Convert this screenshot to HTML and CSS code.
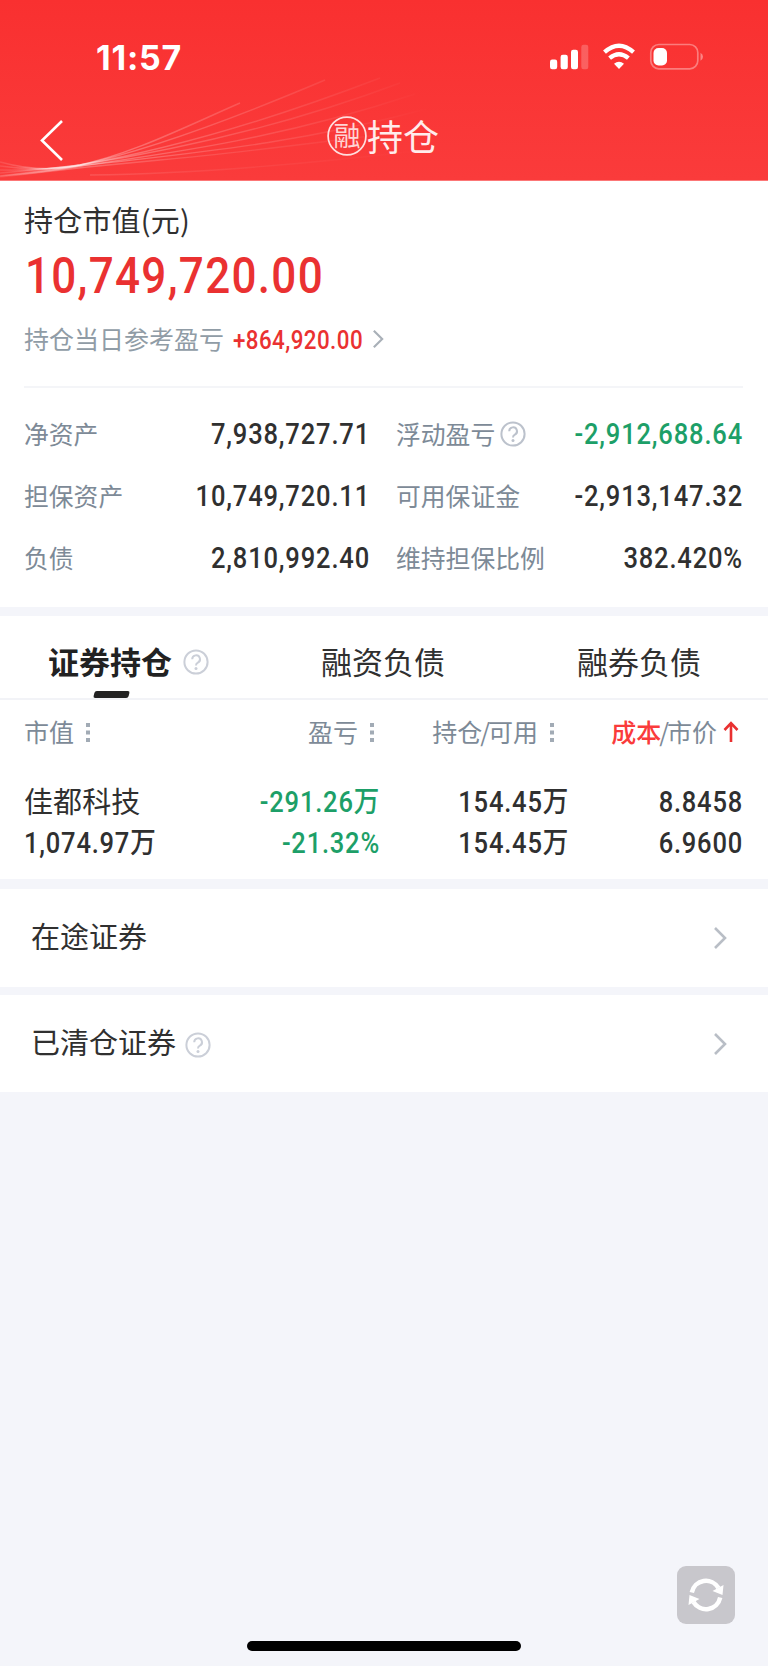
FILE: index.html
```html
<!DOCTYPE html>
<html lang="zh-CN">
<head>
<meta charset="utf-8">
<title>融持仓</title>
<link rel="stylesheet" href="styles.css">
</head>
<body>
<svg class="defs" width="0" height="0">
  <symbol id="help" viewBox="0 0 26 26"><g fill="none" stroke="currentColor"><circle cx="13" cy="13" r="11.6" stroke-width="2"/><path d="M9.2 10.2a3.9 3.9 0 1 1 5.7 3.5c-1.3.7-1.9 1.2-1.9 2.8" stroke-width="2"/></g><circle cx="13" cy="19.4" r="1.500" fill="currentColor"/></symbol>
  <symbol id="chev" viewBox="0 0 14 24"><path d="M2 2l10 10L2 22" fill="none" stroke="currentColor" stroke-width="2.6"/></symbol>
  <symbol id="dots" viewBox="0 0 6 22"><path d="M1 2h4v4H1zM1 9.500h4v4H1zM1 17h4v4H1z" fill="currentColor"/></symbol>
</svg>
<div class="screen">
  <header class="top">
    <svg class="waves" width="480" height="181" viewBox="0 0 480 181" fill="none" stroke="url(#fade)" stroke-width="1.4">
      <defs><linearGradient id="fade" gradientUnits="userSpaceOnUse" x1="0" y1="0" x2="430" y2="0"><stop offset="0" stop-color="#fff" stop-opacity=".1"/><stop offset=".15" stop-color="#fff" stop-opacity=".36"/><stop offset=".45" stop-color="#fff" stop-opacity=".19"/><stop offset="1" stop-color="#fff" stop-opacity="0"/></linearGradient></defs>
      <path d="M0 162Q40 173 75 166C130 155 185 127 240 103"/>
      <path d="M0 166Q40 172 80 165C150 150 235 118 325 80"/>
      <path d="M0 170Q40 171 80 165C160 151 260 124 380 78"/>
      <path d="M0 173Q40 170 80 165C170 151 280 128 400 83"/>
      <path d="M0 176Q40 171 80 166C180 152 285 137 415 94"/>
      <path d="M0 176Q40 173 80 166C180 154 290 146 430 108"/>
      <path d="M0 177Q80 167 160 160T440 127" opacity=".7"/>
      <path d="M90 175Q240 173 440 148" opacity=".4"/>
    </svg>
    <div class="status">
      <span class="time">11:57</span>
      <svg class="indicators" width="156" height="28" viewBox="0 0 156 28">
        <g fill="#fff"><rect x="0" y="16.500" width="7.200" height="9.800" rx="2.200"/><rect x="10.600" y="11.800" width="7.200" height="14.500" rx="2.200"/><rect x="21" y="6.800" width="7" height="19.500" rx="2.200"/><rect x="31.300" y="1.800" width="7" height="24.500" rx="2.200" opacity=".22"/><path d="M69 26l-5-5.200q5-4 10 0z"/></g>
        <path d="M54.500 9.200q14.500-13 29 0M59.600 15.200q9.400-8 18.800 0" fill="none" stroke="#fff" stroke-width="4.300"/>
        <rect x="100.800" y="1.500" width="47" height="24.300" rx="8" fill="none" stroke="#fff" stroke-opacity=".36" stroke-width="1.700"/><rect x="103.500" y="5" width="13.500" height="17.500" rx="5" fill="#fff"/><path d="M150.500 9.700q2.500 1.500 2.500 4t-2.500 4z" fill="#fff" opacity=".4"/>
      </svg>
    </div>
    <div class="nav">
      <svg class="back" width="26" height="44" viewBox="0 0 26 44"><path d="M22 2L2 21.500 22 41" fill="none" stroke="#fff" stroke-width="2.600"/></svg>
      <h1 class="title"><svg width="40" height="40" viewBox="0 0 40 40"><circle cx="20" cy="20" r="18.900" fill="none" stroke="#ffdede" stroke-width="1.700"/><text class="badge" x="20" y="30" text-anchor="middle">融</text></svg><span>持仓</span></h1>
    </div>
  </header>

  <section class="summary">
    <div class="caption">持仓市值(元)</div>
    <div class="total">10,749,720.00</div>
    <div class="daily"><span>持仓当日参考盈亏</span><b class="num gain">+864,920.00</b><svg width="12" height="20"><use href="#chev"/></svg></div>
    <div class="stats">
      <span class="label">净资产</span><b class="num">7,938,727.71</b><span class="label second">浮动盈亏<svg width="26" height="26"><use href="#help"/></svg></span><b class="num loss">-2,912,688.64</b>
      <span class="label">担保资产</span><b class="num">10,749,720.11</b><span class="label second">可用保证金</span><b class="num">-2,913,147.32</b>
      <span class="label">负债</span><b class="num wide">2,810,992.40</b><span class="label second">维持担保比例</span><b class="num">382.420%</b>
    </div>
  </section>

  <section class="holdings">
    <nav class="tabs">
      <div class="tab active"><span>证券持仓</span><svg width="26" height="26"><use href="#help"/></svg></div>
      <div class="tab"><span>融资负债</span></div>
      <div class="tab"><span>融券负债</span></div>
    </nav>
    <div class="table head">
      <div>市值<svg width="6" height="22"><use href="#dots"/></svg></div>
      <div>盈亏<svg width="6" height="22"><use href="#dots"/></svg></div>
      <div>持仓<span class="slash">/</span>可用<svg width="6" height="22"><use href="#dots"/></svg></div>
      <div><span class="sorted">成本</span><span class="slash">/</span>市价<svg class="up" width="16" height="22" viewBox="0 0 16 22"><path d="M8 21V3M1.500 9L8 2.200 14.500 9" fill="none" stroke="#e93030" stroke-width="2.600"/></svg></div>
    </div>
    <div class="table row">
      <div class="name">佳都科技</div><div class="loss">-291.26万</div><div>154.45万</div><div>8.8458</div>
      <div>1,074.97万</div><div class="loss">-21.32%</div><div>154.45万</div><div>6.9600</div>
    </div>
  </section>

  <a class="link"><span>在途证券</span><svg class="go" width="14" height="24"><use href="#chev"/></svg></a>
  <a class="link"><span>已清仓证券</span><svg class="tip" width="26" height="26"><use href="#help"/></svg><svg class="go" width="14" height="24"><use href="#chev"/></svg></a>

  <footer class="bottom">
    <button class="refresh" aria-label="刷新"><svg width="36" height="36" viewBox="0 0 36 36"><g fill="none" stroke="#fff" stroke-width="4.500"><path d="M3.800 15.500A14.500 14.500 0 0 1 30.500 11"/><path d="M32.200 20.500A14.500 14.500 0 0 1 5.500 25"/></g><path d="M35.500 8L34.500 18 24.500 14zM.5 28L1.500 18 11.500 22z" fill="#fff"/></svg></button>
    <div class="home"></div>
  </footer>
</div>
</body>
</html>
```
FILE: styles.css
```css
* { box-sizing: border-box; }
body { margin: 0; background: #fff; color: #303030; font-family: "Noto Sans CJK SC", sans-serif; }
svg { display: block; flex: none; }
.defs { position: absolute; }
.screen { width: 768px; height: 1666px; background: #f4f5fa; display: flex; flex-direction: column; }

.top { position: relative; height: 181px; background: linear-gradient(#f93030, #fa3b3b); border-bottom: 1px solid #fc7777; color: #fff; }
.waves { position: absolute; left: 0; top: 0; }
.status { height: 96px; padding: 43px 62px 0 96px; display: flex; justify-content: space-between; align-items: flex-start; }
.time { font: 700 34px/29px Inter, sans-serif; letter-spacing: .8px; }
.nav { height: 84px; padding: 0 40px; display: grid; grid-template-columns: 26px 1fr 26px; }
.back { margin-top: 23px; }
.title { margin: 0; padding-right: 2px; height: 79px; display: flex; align-items: center; justify-content: center; font-size: 36px; font-weight: 400; color: #ffecec; }
.title span { line-height: 40px; margin-bottom: 2px; }
.badge { font-size: 27px; font-weight: 400; fill: #ffd4d4; }

.summary { height: 426px; background: #fff; padding: 17px 25px 0 24px; }
.caption { font-size: 29px; line-height: 42px; height: 42px; letter-spacing: .2px; }
/* Figures are set in a slightly condensed, open-spaced Roboto */
.total { height: 67px; font: 500 50px/73px Roboto, sans-serif; color: #ea3131; letter-spacing: 1.5px; transform: scaleX(.88); transform-origin: left; padding-left: 1px; }
.daily { height: 81px; padding-bottom: 16px; display: flex; align-items: center; color: #909ca6; font-size: 25px; border-bottom: 2px solid #f4f5f8; }
.daily span { margin-bottom: 1px; }
.daily .num { font-size: 26px; margin: 2px -12px 0 9px; letter-spacing: .5px; transform: scaleX(.86); transform-origin: left; }
.daily svg { color: #a9b0b8; }
.num { font-family: Roboto, sans-serif; font-weight: 500; font-size: 29px; letter-spacing: .95px; transform: scaleX(.88); transform-origin: right; }
.gain { color: #ea3131; }
.loss { color: #1d9f68; }
.stats { padding-top: 15px; display: grid; grid-template-columns: 120px 226px 160px 1fr; grid-auto-rows: 62px; align-items: center; }
.stats .num { text-align: right; }
.label { color: #7d8a97; font-size: 24.8px; white-space: nowrap; margin-bottom: 3px; }
.second { padding-left: 26px; display: flex; align-items: center; gap: 5px; }
.second svg { color: #bcc2cc; margin-top: 3px; }

.holdings { margin-top: 9px; height: 263px; background: #fff; }
.tabs { height: 84px; border-bottom: 2px solid #f2f3f7; display: grid; grid-template-columns: 256px 256px 256px; }
.tab { position: relative; display: flex; align-items: center; justify-content: center; font-size: 31px; height: 92px; }
.tab span { margin: 0 2px 3px 0; }
.active { justify-content: flex-start; padding-left: 48px; font-weight: 700; gap: 9px; color: #222; }
.active svg { color: #cbcfd8; }
.active::after { content: ""; position: absolute; left: 94px; top: 75px; width: 35px; height: 7px; background: #222; border-radius: 2px; transform: skewX(-14deg); }
.table { display: grid; grid-template-columns: 160px 196px 189px 1fr; padding: 0 25px 0 24px; }
.table > div { display: flex; align-items: center; justify-content: flex-end; white-space: nowrap; }
.table > div:nth-child(4n+1) { justify-content: flex-start; }
.head { height: 62px; color: #7d8a97; font-size: 25px; }
.head > div:nth-child(2) { padding-right: 5px; }
.head > div:nth-child(3) { padding-right: 14px; }
.head svg { margin: 2px 0 0 11px; color: #a2abb5; }
.head .up { margin: 2px 4px 0 6px; }
.slash { margin: 0 -2px; }
.sorted { color: #fa3b3b; font-weight: 500; }
.row { padding-top: 20px; grid-auto-rows: 41px; font: 500 29px/41px Roboto, "Noto Sans CJK SC", sans-serif; letter-spacing: .9px; }
.row > div { transform: scaleX(.88); transform-origin: right; }
.row > div:nth-child(4n+1) { transform-origin: left; }
.row > .name { font-weight: 400; font-family: "Noto Sans CJK SC", sans-serif; letter-spacing: .1px; transform: none; padding-bottom: 4px; }

.link { background: #fff; height: 98px; display: flex; align-items: center; padding: 0 41px 0 31px; font-size: 29px; margin-top: 10px; }
.link + .link { margin-top: 8px; height: 97px; }
.link span { padding-bottom: 6px; }
.tip { margin: 2px 0 0 9px; color: #cbcfd8; }
.go { margin-left: auto; color: #b9bec6; }

.bottom { flex: 1; display: flex; flex-direction: column; justify-content: flex-end; align-items: center; padding-bottom: 15px; }
.refresh { align-self: flex-end; width: 58px; height: 58px; margin: 0 33px 17px 0; border: 0; border-radius: 9px; background: #c8c7cc; padding: 0; display: flex; align-items: center; justify-content: center; }
.home { width: 274px; height: 10px; border-radius: 5px; background: #000; }
```
